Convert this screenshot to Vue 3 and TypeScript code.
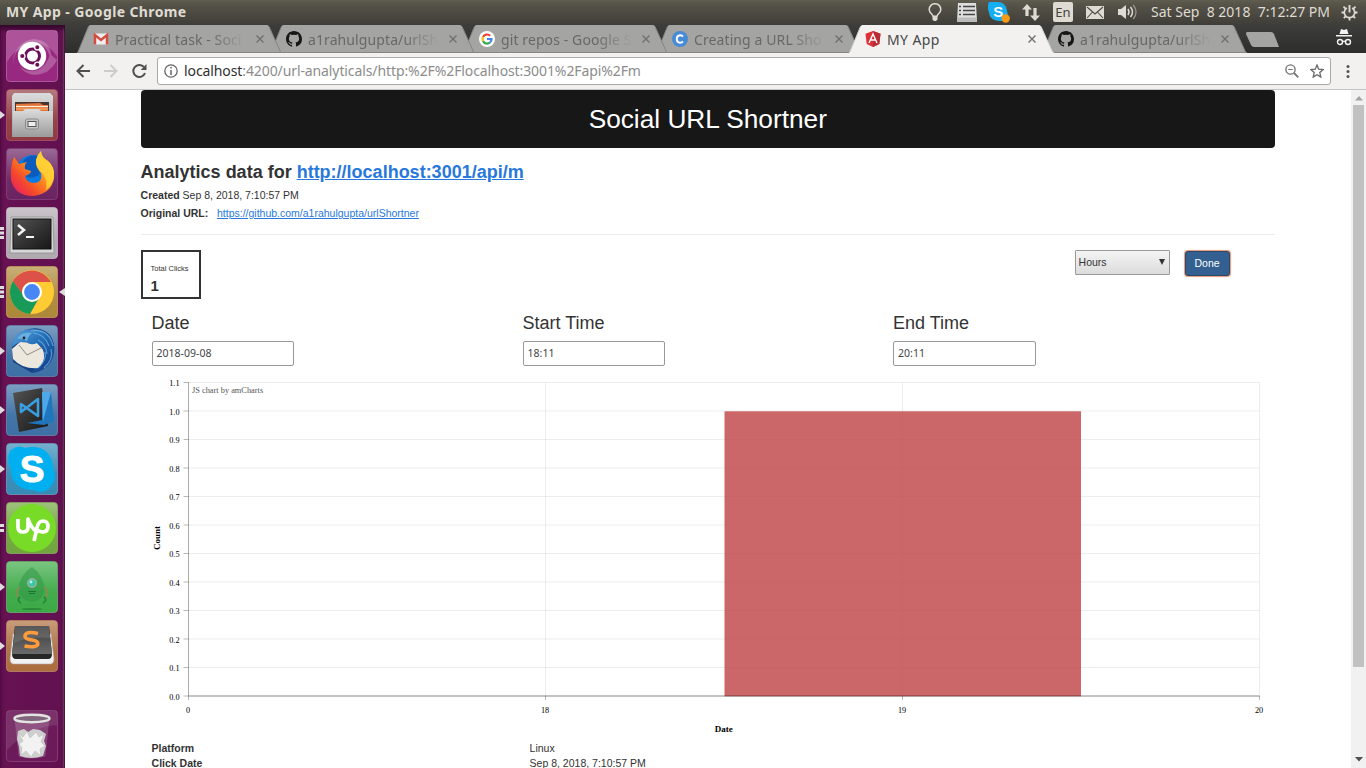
<script setup lang="ts">
interface Tab {
  title: string
  icon: 'gmail' | 'github' | 'google' | 'c' | 'angular'
  active?: boolean
}

const tabs: Tab[] = [
  { title: 'Practical task - Soci', icon: 'gmail' },
  { title: 'a1rahulgupta/urlSh', icon: 'github' },
  { title: 'git repos - Google S', icon: 'google' },
  { title: 'Creating a URL Sho', icon: 'c' },
  { title: 'MY App', icon: 'angular', active: true },
  { title: 'a1rahulgupta/urlSh', icon: 'github' },
]

interface Launcher {
  name: string
  windows: number
  focused?: boolean
}

const launchers: Launcher[] = [
  { name: 'dash', windows: 0 },
  { name: 'files', windows: 1 },
  { name: 'firefox', windows: 0 },
  { name: 'terminal', windows: 3 },
  { name: 'chrome', windows: 3, focused: true },
  { name: 'thunderbird', windows: 1 },
  { name: 'code', windows: 1 },
  { name: 'skype', windows: 1 },
  { name: 'upwork', windows: 2 },
  { name: 'robot', windows: 1 },
  { name: 'sublime', windows: 1 },
  { name: 'trash', windows: 0 },
]

const fields = [
  { label: 'Date', value: '2018-09-08' },
  { label: 'Start Time', value: '18:11' },
  { label: 'End Time', value: '20:11' },
]

const details = [
  { key: 'Platform', value: 'Linux' },
  { key: 'Click Date', value: 'Sep 8, 2018, 7:10:57 PM' },
]

const yTicks = Array.from({ length: 12 }, (_, i) => ({
  label: ((11 - i) / 10).toFixed(1),
  y: Math.round(i * 28.5 * 2) / 2 + 7.5,
}))
const xTicks = ['0', '18', '19', '20'].map((label, i) => ({ label, x: 47.5 + i * 357 }))
</script>

<template>
  <div class="desktop">
    <header class="panel">
      <span class="wintitle">MY App - Google Chrome</span>
      <div class="tray">
        <svg class="bulb" width="14" height="18" viewBox="0 0 14 18"><path d="M5 13.200C5 11.500 1.200 10 1.200 6.500a5.800 5.800 0 0 1 11.600 0C12.800 10 9 11.500 9 13.200z" fill="none" stroke="#dfdbd2" stroke-width="1.500" /><path d="M4.500 14h5v2.500L8 18H6l-1.500-1.500z" fill="#dfdbd2" /></svg>
        <svg class="list" width="20" height="19" viewBox="0 0 20 19"><path d="M1 0h18l1 19H0z" fill="#dedede" /><path d="M2 3.500h2M6 3.500h12M2 7.500h2M6 7.500h12M2 11.500h2M6 11.500h12" stroke="#454545" stroke-width="1.300" /><path d="M0 14.500h20V19H0z" fill="#bcbcbc" /></svg>
        <svg class="sky" width="23" height="22" viewBox="0 0 23 22"><path d="M1 1h8a9 9 0 0 1 10 9c2 6 0 10-7 10C5 20 1 16 1 11-1 8 0 3 1 1z" fill="#15aef0" /><text x="10.300" y="16" text-anchor="middle" class="sk">S</text><circle cx="17.700" cy="17.500" r="4.200" fill="#f59b16" /></svg>
        <svg class="net" width="18" height="17" viewBox="0 0 18 17"><path d="M5 0l5 5.500H6.600V12H3.400V5.500H0zM13 17l-5-5.500h3.400V4h3.200v7.500H18z" fill="#dfdbd2" /></svg>
        <span class="lang">En</span>
        <svg class="mail" width="18" height="13" viewBox="0 0 18 13"><rect width="18" height="13" fill="#dfdbd2" /><path d="M1 1l8 7 8-7M1 12l5.500-6M17 12l-5.500-6" stroke="#4a4842" stroke-width="1.100" fill="none" /></svg>
        <svg class="vol" width="20" height="16" viewBox="0 0 20 16"><path d="M0 5h3l5-4v14l-5-4H0z" fill="#dfdbd2" /><path d="M10 5q2 3 0 6M12.500 3q4 5 0 10" stroke="#dfdbd2" stroke-width="1.500" fill="none" /><path d="M15.300 1q5.500 7 0 14" stroke="#96938c" stroke-width="1.300" fill="none" /></svg>
        <span class="clock">Sat Sep&nbsp; 8 2018&nbsp; 7:12:27 PM</span>
        <svg class="gear" width="17" height="17" viewBox="-8.500 -8.500 17 17"><path d="M-2.600-4.500A5.200 5.200 0 1 0 2.600-4.500" fill="none" stroke="#dfdbd2" stroke-width="1.700" /><path d="M0-7.500V0" stroke="#dfdbd2" stroke-width="1.900" /><path d="M5 0h3M-5 0h-3M0 5v3M3.700 3.700l2 2M-3.700 3.700l-2 2M4-3.800l2-2M-4-3.800l-2-2" stroke="#dfdbd2" stroke-width="1.800" /></svg>
      </div>
    </header>

    <div class="below">
      <nav class="dock">
        <div v-for="l in launchers" :key="l.name" class="slot" :class="l.name">
          <svg class="tile" width="52" height="52" viewBox="0 0 52 52">
            <defs>
              <linearGradient id="shine" x1="0" y1="0" x2="0" y2="1"><stop offset="0" stop-color="#fff" stop-opacity=".32" /><stop offset=".6" stop-color="#fff" stop-opacity=".04" /><stop offset="1" stop-color="#fff" stop-opacity="0" /></linearGradient>
              <linearGradient id="metal" x1="0" y1="0" x2="0" y2="1"><stop offset="0" stop-color="#dcdcdc" /><stop offset="1" stop-color="#9d9d9d" /></linearGradient>
              <linearGradient id="dark" x1="0" y1="0" x2="1" y2="1"><stop offset="0" stop-color="#555" /><stop offset=".5" stop-color="#343434" /><stop offset="1" stop-color="#171717" /></linearGradient>
              <linearGradient id="lid" x1="0" y1="0" x2="0" y2="1"><stop offset="0" stop-color="#3c3c3c" /><stop offset="1" stop-color="#6a6a6a" /></linearGradient>
              <linearGradient id="fox" x1="1" y1="0" x2="0" y2="1"><stop offset="0" stop-color="#ffe34a" /><stop offset=".4" stop-color="#ff9a1c" /><stop offset=".7" stop-color="#f5472c" /><stop offset="1" stop-color="#e31475" /></linearGradient>
              <linearGradient id="bird" x1="0" y1="0" x2="1" y2="1"><stop offset="0" stop-color="#5ba6df" /><stop offset=".5" stop-color="#206bb4" /><stop offset="1" stop-color="#12347e" /></linearGradient>
            </defs>
            <rect class="base" x=".5" y=".5" width="51" height="51" rx="3.500" />
            <rect v-if="!['dash', 'trash'].includes(l.name)" x="1" y="1" width="50" height="50" rx="3" fill="url(#shine)" />

            <g v-if="l.name === 'dash'">
              <path d="M1 1h50v25C38 8 16 8 1 32z" fill="#fff" opacity=".2" />
              <path d="M7 34C7 14 25 4 38 12c9 6 10 22 2 32 8-13 4-29-11-30C16 13 8 21 7 34zM51 30C42 48 22 49 13 36c9 9 26 7 31-12z" fill="#fff" opacity=".24" />
              <circle cx="26" cy="26" r="14.200" fill="#fff" />
              <circle cx="26.500" cy="26" r="7" fill="none" stroke="#6d0f58" stroke-width="3" />
              <g stroke="#fff" stroke-width="1.300" fill="#6d0f58"><circle cx="16.300" cy="26" r="2.700" /><circle cx="31.300" cy="17.200" r="2.700" /><circle cx="31.300" cy="34.800" r="2.700" /></g>
            </g>
            <g v-else-if="l.name === 'files'">
              <path d="M6 7l2-3h36l3 3v41H6z" fill="url(#metal)" />
              <path d="M9 13h34v10H9z" fill="#4a3630" />
              <path d="M10 15l24-1 3 2h5v7H10z" fill="#e27437" /><path d="M10 17.500h32" stroke="#fff0d8" stroke-width="1.300" /><path d="M10 20h32" stroke="#f8bd7b" />
              <path d="M7 22h10l2-2h14l2 2h12v25H7z" fill="url(#metal)" />
              <rect x="19.500" y="30" width="13" height="10" rx="2" fill="#c6c6c6" stroke="#888" /><rect x="22" y="32.500" width="8" height="5" fill="#eee" stroke="#555" />
            </g>
            <g v-else-if="l.name === 'firefox'">
              <circle cx="27" cy="24" r="17" fill="#087be2" /><path d="M17 13q9-9 19-3l-3 17q-8 5-14 1z" fill="#0a4fae" opacity=".7" />
              <path d="M8 9l5 7q4-1 8-2-3 3-2 7l6 2q0 3-6 5 1 6 8 7 10 0 8-10-6-6-5-13Q31 7 35 3q0 6 7 10 7 6 6 16Q46 46 27 48 9 48 5 32 4 18 8 9z" fill="url(#fox)" />
              <path d="M30 12Q31 7 35 3q0 6 7 10 7 6 6 16-1 8-8 13 2-9-3-16-8-7-7-14z" fill="#ffd335" opacity=".85" />
            </g>
            <g v-else-if="l.name === 'terminal'">
              <path d="M5 10h42l1 36H4z" fill="#d6d6d6" stroke="#888" stroke-width=".7" /><rect x="7" y="12" width="38" height="30" fill="url(#dark)" stroke="#111" />
              <path d="M12 18l6 5-6 5" fill="none" stroke="#f4f4f4" stroke-width="2.500" /><path d="M20 30h8" stroke="#f4f4f4" stroke-width="2" />
            </g>
            <g v-else-if="l.name === 'chrome'">
              <circle cx="26" cy="26" r="22" fill="#fecb32" />
              <path d="M7 15A22 22 0 0 1 45 16H26a10 10 0 0 0-9 14z" fill="#dc5148" />
              <path d="M7 15A22 22 0 0 0 24 48l9-16q-12 4-16-3z" fill="#189b59" />
              <circle cx="26" cy="26" r="10" fill="#fff" /><circle cx="26" cy="26" r="7.900" fill="#4687f4" />
            </g>
            <g v-else-if="l.name === 'thunderbird'">
              <path d="M6 24Q6 10 20 5 34 0 44 10q8 12 1 26-8 11-19 12L7 37z" fill="#184386" />
              <path d="M6 24l8-7 17 1 10 11-7 14q-17 2-27-9z" fill="#ece8de" /><path d="M13 20l8 10 16-8" stroke="#8f8c86" fill="none" />
              <path d="M6 22Q7 10 17 6q17-6 27 5 8 13 0 27-6 9-19 9 12-5 13-14 1-10-7-15-6 3-11-1-7-1-14 5z" fill="url(#bird)" />
              <path d="M27 8q12 1 16 13M32 15q8 4 9 14M39 27q2 8-7 16M25 6q18-3 22 15M45 24q3 10-7 19" fill="none" stroke="#7bbdec" stroke-width="1.200" opacity=".65" />
              <path d="M11 14q5-8 15-6-4 3-5 8-5-3-10-2z" fill="#69afdf" /><circle cx="18" cy="13" r="1.400" fill="#223" />
            </g>
            <g v-else-if="l.name === 'code'">
              <path d="M7 9l29-5 6 38-29 6z" fill="url(#dark)" /><path d="M36 8h9l3 29-10 4-17-2 15-3z" fill="#1f76bd" /><path d="M36 8h9l-8 29z" fill="#4ea8e8" />
              <path d="M15 20l17 12V15L15 28z" fill="none" stroke="#3a9fe0" stroke-width="2.600" stroke-linejoin="round" />
            </g>
            <g v-else-if="l.name === 'skype'">
              <path d="M5 7Q12 1 19 5c17-4 28 5 28 21 5 9-1 19-8 22-6 2-11-1-13-1C13 47 5 39 5 26 1 19 2 10 5 7z" fill="#00aff0" />
              <text x="26" y="39" text-anchor="middle" class="skbig">S</text>
            </g>
            <g v-else-if="l.name === 'upwork'">
              <circle cx="26" cy="26" r="24" fill="#77db27" />
              <path d="M12 17v8q0 5 5 5t5-5v-8q3 9 9 13M28 39l3-13q1-7 6.500-7 4.500.500 4.500 5.500t-5 5.500q-3 0-6-2" fill="none" stroke="#fff" stroke-width="3.700" stroke-linejoin="round" />
            </g>
            <g v-else-if="l.name === 'robot'">
              <path d="M26 6q12 9 13 23-3 11-13 12-11-1-14-12Q14 13 26 6z" fill="#2b9445" opacity=".5" />
              <path d="M14 26q-5 5-2 11M38 26q5 5 2 11" stroke="#8a8b52" stroke-width="2.600" fill="none" opacity=".75" /><path d="M14 36q-4 3 1 6M38 36q4 3-1 6" stroke="#27833d" stroke-width="1.600" fill="none" />
              <circle cx="26" cy="22" r="5" fill="#8fb3a0" /><circle cx="26" cy="22" r="3.300" fill="#35c9a2" /><circle cx="25" cy="21" r="1.400" fill="#b1ffe4" /><path d="M22 30.500h8M23 32.500h6" stroke="#1c7233" /><ellipse cx="26" cy="48" rx="10" ry="1" fill="#298a39" />
            </g>
            <g v-else-if="l.name === 'sublime'">
              <path d="M7 14L4 39q0 5 4 5h36q4 0 4-5l-3-25z" fill="#f2f2f2" stroke="#aaa" stroke-width=".6" />
              <path d="M9 6h34l3 28q0 5-4 5H10q-4 0-4-5z" fill="#272727" /><path d="M9 6h34l3 28H6z" fill="url(#lid)" /><path d="M9 6h34l1 12Q25 16 8 23z" fill="#999" opacity=".3" />
              <path d="M32 13.500q-13-3-13 3 0 2.500 7 3.500t5.500 5q-3 3-13 1" fill="none" stroke="#ff9b3a" stroke-width="3.600" />
            </g>
            <g v-else>
              <path d="M1 1h50v14Q23 17 1 40z" fill="#fff" opacity=".1" /><path d="M9 8l4 38q13 4 26 0l4-38" fill="#cbb4c8" opacity=".25" stroke="#d8c9d5" stroke-width=".8" />
              <path d="M12 21l6-2 4 3 5-3 7 1 6 4-2 7 2 5-3 10q-12 4-23 0l-1-9-2-8z" fill="#cfcfcf" />
              <path d="M12 22l5 5 4-6 3 7 6-6 3 5 5-3-3 8 4 4-5 3 1 7-6-5-4 6-5-6-5 4 1-7-3-4 4-3z" fill="#f2f2f2" stroke="#bbb" stroke-width=".6" />
              <ellipse cx="26" cy="8.500" rx="17.500" ry="3.700" fill="#81657d" stroke="#e3e3df" stroke-width="2.400" />
            </g>
          </svg>
          <svg v-if="l.windows" class="marks" width="6" height="14" viewBox="0 0 6 14">
            <path v-if="l.windows === 1" d="M0 3l5 4-5 4z" />
            <path v-else-if="l.windows === 2" d="M0 3h4v3H0zM0 8h4v3H0z" />
            <path v-else d="M0 1h4v3H0zM0 5.500h4v3H0zM0 10h4v3H0z" />
          </svg>
          <svg v-if="l.focused" class="focus" width="6" height="10" viewBox="0 0 6 10"><path d="M6 1L0 5l6 4z" /></svg>
        </div>
      </nav>

      <main class="browser">
        <div class="tabstrip">
          <div v-for="(t, i) in tabs" :key="i" class="tab" :class="{ active: t.active }" :style="{ zIndex: t.active ? 20 : 10 - i }">
            <svg class="shape" width="206" height="28" viewBox="0 0 206 28"><path class="fill" d="M0 28L1 27 11.500 1.500Q12 0 13.500 0H190Q191.500 0 192 1.500L203.500 27 205 28z" /><path class="edge" d="M0 28L1 27 11.500 1.500M192 1.500L203.500 27 205 28" /><path v-if="!t.active" class="edge" d="M1 27.500H204" /></svg>
            <svg class="fav" width="16" height="16" viewBox="0 0 16 16">
              <g v-if="t.icon === 'gmail'"><path d="M1 2.500h14v11H1z" fill="#eee" /><path d="M2 13.500V4l6 5 6-5v9.500" stroke="#d54b3e" stroke-width="2.400" fill="none" /></g>
              <path v-else-if="t.icon === 'github'" fill="#171717" d="M8 0C3.580 0 0 3.580 0 8c0 3.540 2.290 6.530 5.470 7.590.4.070.55-.17.55-.38v-1.490c-2.230.48-2.700-1.070-2.700-1.070-.36-.92-.89-1.170-.89-1.170-.73-.5.050-.49.050-.49.810.06 1.230.83 1.230.83.720 1.230 1.880.87 2.330.67.070-.52.280-.87.510-1.070-1.780-.2-3.640-.89-3.640-3.950 0-.87.310-1.590.82-2.150-.08-.2-.36-1.020.08-2.120 0 0 .67-.21 2.200.82a7.600 7.600 0 0 1 4 0c1.530-1.040 2.200-.82 2.200-.82.440 1.100.16 1.920.08 2.120.51.560.82 1.270.82 2.150 0 3.070-1.870 3.750-3.650 3.950.29.250.54.730.54 1.480v2.200c0 .21.150.46.550.38A8 8 0 0 0 16 8c0-4.420-3.580-8-8-8z" />
              <g v-else-if="t.icon === 'google'" fill="none" stroke-width="2.200"><circle cx="8" cy="8" r="8" fill="#fff" /><path d="M11.200 4.800A4.500 4.500 0 0 0 4 6" stroke="#ea4335" /><path d="M4 6a4.500 4.500 0 0 0 0 4" stroke="#fbbc05" /><path d="M4 10a4.500 4.500 0 0 0 7 1.500" stroke="#34a853" /><path d="M11 11.500A4.400 4.400 0 0 0 12.500 8H8" stroke="#4285f4" /></g>
              <g v-else-if="t.icon === 'c'"><circle cx="8" cy="8" r="8" fill="#478bd6" /><path d="M11 5.500Q9.500 4.200 8 4.300 4.800 4.500 4.800 8q0 3.600 3.400 3.700 1.500 0 2.800-1.200" stroke="#fff" stroke-width="2" fill="none" /></g>
              <g v-else><path d="M8 0l7.500 2.700L14.300 13 8 16l-6.300-3L.5 2.700z" fill="#dc3038" /><path d="M8 0l7.500 2.700L14.300 13 8 16z" fill="#b82c35" /><path d="M4 12l4-9 4 9M5.500 9h5" stroke="#fff" stroke-width="1.400" fill="none" /></g>
            </svg>
            <span class="tabtitle">{{ t.title }}</span>
            <svg class="close" width="8" height="8" viewBox="0 0 8 8"><path d="M.5.5l7 7M7.500.5l-7 7" /></svg>
          </div>
          <svg class="newtab" width="33" height="15" viewBox="0 0 33 15"><path d="M1 0h24q2 0 3 2l5 13H8q-2 0-3-2L0 2q0-2 1-2z" /></svg>
          <svg class="incog" width="16" height="17" viewBox="0 0 16 17"><path d="M5 0l3 1 3-1 1.500 5h-9zM0 6h16v1.600H0z" fill="#f3f3f3" /><g fill="none" stroke="#f3f3f3" stroke-width="1.400"><circle cx="4" cy="13" r="2.500" /><circle cx="12" cy="13" r="2.500" /><path d="M6.500 12.700q1.500-1 3 0" /></g></svg>
        </div>

        <div class="toolbar">
          <svg class="back" width="14" height="14" viewBox="0 0 14 14"><path d="M14 7H1.500M7.500 1L1.500 7l6 6" /></svg>
          <svg class="fwd" width="14" height="14" viewBox="0 0 14 14"><path d="M0 7h12.500M6.500 1l6 6-6 6" /></svg>
          <svg class="reload" width="15" height="14" viewBox="0 0 15 14"><path d="M12 3.200A6 6 0 1 0 13 9" fill="none" stroke="#505050" stroke-width="2" /><path d="M14.500 0v6H8.700z" fill="#505050" /></svg>
          <div class="omnibox">
            <svg width="14" height="14" viewBox="0 0 14 14"><circle cx="7" cy="7" r="6.200" fill="none" stroke="#666" stroke-width="1.300" /><path d="M7 3v1.600M7 6v5" stroke="#666" stroke-width="1.500" /></svg>
            <span class="url"><b>localhost</b>:4200/url-analyticals/http:%2F%2Flocalhost:3001%2Fapi%2Fm</span>
            <svg class="lens" width="14" height="14" viewBox="0 0 14 14" fill="none" stroke="#777"><circle cx="5.500" cy="5.500" r="4.600" stroke-width="1.400" /><path d="M3.200 5.500h4.600" /><path d="M9 9l4.300 4.300" stroke-width="1.800" /></svg>
            <svg width="14" height="14" viewBox="0 0 14 14"><path d="M7 1l1.700 4.200 4.500.4-3.400 3 1 4.500L7 10.700l-3.800 2.400 1-4.500-3.400-3 4.500-.4z" fill="none" stroke="#686868" stroke-width="1.300" /></svg>
          </div>
          <svg class="dots" width="4" height="13" viewBox="0 0 4 13" fill="#555"><circle cx="2" cy="1.500" r="1.500" /><circle cx="2" cy="6.500" r="1.500" /><circle cx="2" cy="11.500" r="1.500" /></svg>
        </div>

        <div class="viewport">
          <section class="page">
            <h1>Social URL Shortner</h1>
            <h2>Analytics data for <a>http://localhost:3001/api/m</a></h2>
            <p class="created"><b>Created</b> Sep 8, 2018, 7:10:57 PM</p>
            <p class="orig"><b>Original URL:</b><a>https://github.com/a1rahulgupta/urlShortner</a></p>
            <hr>
            <div class="controls">
              <div class="total"><span>Total Clicks</span><strong>1</strong></div>
              <div class="select"><span>Hours</span><svg width="6" height="7" viewBox="0 0 6 7"><path d="M0 0h6L3 6z" fill="#333" /></svg></div>
              <button>Done</button>
            </div>
            <div class="fields">
              <label v-for="f in fields" :key="f.label"><span>{{ f.label }}</span><div class="input">{{ f.value }}</div></label>
            </div>
            <svg class="chart" width="1134" height="365" viewBox="0 0 1134 365">
              <g v-for="t in yTicks" :key="t.label">
                <path :d="`M47.500 ${t.y}H1118.500`" class="grid" /><path :d="`M42.500 ${t.y}h5`" class="axis" />
                <text x="38.500" :y="t.y + 3.500" text-anchor="end">{{ t.label }}</text>
              </g>
              <g v-for="t in xTicks" :key="t.label">
                <path :d="`M${t.x} 7.500V321`" class="grid" /><path :d="`M${t.x} 321v4`" class="axis" />
                <text :x="t.x - 0.5" y="337.500" text-anchor="middle">{{ t.label }}</text>
              </g>
              <rect x="583.500" y="36.300" width="356.500" height="285" fill="#c14a4c" fill-opacity=".84" />
              <path d="M47.500 7v314" class="axis" /><path d="M47.500 321H1118.500" class="axis base" />
              <text x="51" y="18" class="credit">JS chart by amCharts</text>
              <text transform="translate(19 163) rotate(-90)" text-anchor="middle" class="bold">Count</text>
              <text x="582.700" y="357" text-anchor="middle" class="bold">Date</text>
            </svg>
            <dl>
              <div v-for="d in details" :key="d.key"><dt>{{ d.key }}</dt><dd>{{ d.value }}</dd></div>
            </dl>
          </section>
          <aside class="scroll">
            <svg width="8" height="5" viewBox="0 0 8 5"><path d="M4 0l4 4.500H0z" fill="#a3a3a3" /></svg>
            <i></i>
            <svg class="down" width="8" height="5" viewBox="0 0 8 5"><path d="M0 0h8L4 4.500z" fill="#505050" /></svg>
          </aside>
        </div>
      </main>
    </div>
  </div>
</template>

<style>
html, body { margin: 0; overflow: hidden; }
</style>

<style scoped>
* { box-sizing: border-box; }
svg { display: block; flex: none; }
.desktop { width: 1366px; height: 768px; overflow: hidden; display: flex; flex-direction: column; background: #fff; font-family: "Noto Sans", sans-serif; }
.panel { height: 25px; flex: none; display: flex; justify-content: space-between; background: linear-gradient(#605d50, #575449 15%, #3e3d38); color: #dfdbd2; }
.wintitle { font: bold 14px/24px "Noto Sans", sans-serif; padding-left: 6px; letter-spacing: .38px; white-space: nowrap; }
.tray { display: flex; align-items: center; height: 24px; padding-right: 8px; }
.bulb { margin-right: 15px; }
.list { margin-right: 11px; }
.sky { margin-right: 11px; }
.sk { font: bold 15px "Liberation Sans", sans-serif; fill: #fff; }
.net { margin-right: 13px; }
.lang { width: 20px; height: 20px; border-radius: 2px; background: #dfdbd2; color: #45433e; font-size: 13px; line-height: 20px; text-align: center; margin-right: 13px; }
.mail { margin-right: 14px; }
.vol { margin-right: 13px; }
.clock { font-size: 14px; width: 179px; white-space: nowrap; line-height: 24px; margin-right: 11px; }
.below { flex: 1; display: flex; min-height: 0; }
.dock { width: 65px; flex: none; background: linear-gradient(90deg, #671253, #621150 96%, #8a5080 97%, #4c0d3e); display: flex; flex-direction: column; gap: 7px; padding: 5px 0 0 6px; box-shadow: inset 0 4px 4px #35072c; }
.slot { width: 52px; height: 52px; position: relative; }
.slot.trash { margin-top: 31px; }
.base { fill: #97398a; stroke: #bd7ab2; stroke-opacity: .65; }
.dash .base { fill: #982880; }
.files .base { fill: #903b42; stroke: #b36367; }
.firefox .base { fill: #6b2362; stroke: #8b4d82; }
.terminal .base { fill: #b1a9b0; stroke: #d1cbd0; }
.chrome .base { fill: #ae8838; stroke: #cead68; }
.thunderbird .base, .code .base { fill: #3d70a5; stroke: #7493b8; }
.skype .base { fill: #368bb5; stroke: #74adc8; }
.upwork .base { fill: #71a53d; stroke: #97b777; }
.robot .base { fill: #3ba945; stroke: #78bb7a; }
.sublime .base { fill: #ad6d3c; stroke: #c79975; }
.trash .base { fill: #6c1a5a; stroke: #8e517f; }
.skbig { font: bold 37px "Liberation Sans", sans-serif; fill: #fff; stroke: #fff; stroke-width: 1px; }
.marks { position: absolute; left: -6px; top: 19px; fill: #ddd; }
.focus { position: absolute; left: 53px; top: 21px; fill: #ddd; }
.browser { flex: 1; min-width: 0; display: flex; flex-direction: column; }
.tabstrip { height: 28px; flex: none; background: linear-gradient(#3d3d3b, #2d2d2c); display: flex; padding-left: 12px; }
.tab { position: relative; width: 206px; height: 28px; flex: none; margin-right: -13px; display: flex; align-items: center; padding-left: 16px; }
.shape { position: absolute; left: 0; top: 0; }
.fill { fill: #a4a4a2; }
.edge { fill: none; stroke: #858583; }
.active .fill { fill: #f2f1f0; }
.active .edge { stroke: #d8d8d6; }
.fav { position: relative; margin-right: 6px; }
.tabtitle { position: relative; width: 133px; white-space: nowrap; font-size: 14px; line-height: 27px; color: #686868; letter-spacing: .1px; mask-image: linear-gradient(90deg, #000 72%, transparent 99%); }
.active .tabtitle { color: #484848; letter-spacing: .4px; mask-image: none; }
.close { position: relative; margin-left: 8px; stroke: #707070; stroke-width: 1.400; }
.newtab { margin: 7px 0 0 11px; fill: #a4a4a2; }
.incog { margin: 4px 14px 0 auto; }
.toolbar { height: 37px; flex: none; background: #f2f1f0; border-bottom: 1px solid #c6c5c3; display: flex; align-items: center; padding: 0 16px 0 11px; }
.back, .fwd { fill: none; stroke: #505050; stroke-width: 2; margin-right: 14px; }
.fwd { stroke: #ccc; }
.omnibox { width: 1174px; height: 28px; margin-left: 10px; border: 1px solid #a9a8a6; border-radius: 3px; background: #fff; display: flex; align-items: center; padding: 0 6px; }
.url { margin-left: 6px; white-space: nowrap; font-size: 14px; letter-spacing: -.1px; color: #8c8c8c; line-height: 26px; }
.url b { font-weight: 400; color: #303030; }
.lens { margin-left: auto; margin-right: 11px; }
.dots { margin-left: auto; }
.viewport { flex: 1; min-height: 0; display: flex; background: #fff; overflow: hidden; }
.page { width: 1134.400px; margin-left: 75.600px; font: 10.500px/15px "Liberation Sans", Arial, sans-serif; color: #333; flex: none; }
h1 { margin: 0; height: 58px; line-height: 58px; border-radius: 4px; background: #171717; color: #fff; font-size: 26.250px; font-weight: 400; text-align: center; }
h2 { margin: 14px 0 0; font-size: 18px; line-height: 20px; }
a { color: #2878dc; text-decoration: underline; }
p { margin: 0; line-height: 15px; }
.created { margin-top: 6px; }
.orig { margin-top: 3px; }
.orig a { margin-left: 8.700px; }
hr { border: 0; border-top: 1px solid #ebebeb; margin: 13px 0 15px; }
.controls { display: flex; align-items: flex-start; height: 49px; }
.total { width: 60px; height: 49px; border: 2px solid #333; padding: 11px 0 0 8px; display: flex; flex-direction: column; }
.total span { font-size: 7.500px; line-height: 11px; white-space: nowrap; }
.total strong { font-size: 15px; line-height: 17px; margin-top: 3px; }
.select { width: 95px; height: 25px; margin-left: 874px; border: 1px solid #999; border-radius: 1px; background: linear-gradient(#f4f4f4, #dcdcdc); display: flex; justify-content: space-between; align-items: center; padding: 0 4px 0 3px; }
button { margin: 1px 0 0 15px; width: 45px; height: 25px; border: 1px solid #29496b; border-radius: 3px; background: #336090; color: #fff; font: 10.500px "Liberation Sans", Arial, sans-serif; padding: 0 0 1px; box-shadow: 0 0 1px 1px #eb9674; }
.fields { display: grid; grid-template-columns: 371px 370.500px 1fr; padding-left: 11px; margin-top: 14px; }
.fields label span { display: block; font-size: 18px; line-height: 20px; }
.input { width: 142.500px; height: 25px; border: 1px solid #999; border-radius: 2px; margin-top: 8px; padding-left: 4px; font: 10.500px/22px "Noto Sans", sans-serif; color: #444; }
.chart { margin: 9px 0 0 .4px; font: 8.250px "Liberation Serif", serif; overflow: hidden; }
.grid { stroke: #000; stroke-opacity: .07; fill: none; }
.axis { stroke: #000; stroke-opacity: .28; fill: none; }
.axis.base { stroke-width: 1.500; fill: none; }
.credit { fill: #555; font-size: 8.350px; }
.bold { font-weight: bold; font-size: 9px; }
dl { margin: 1px 0 0; padding-left: 11px; }
dl div { display: flex; height: 15px; }
dt { width: 378px; font-weight: bold; }
dd { margin: 0; }
.scroll { width: 15px; margin-left: auto; background: #f1f1f1; display: flex; flex-direction: column; align-items: center; padding: 6px 0; }
.scroll i { width: 11px; height: 562px; background: #c1c1c1; margin-top: 4px; }
.down { margin-top: auto; }
</style>
